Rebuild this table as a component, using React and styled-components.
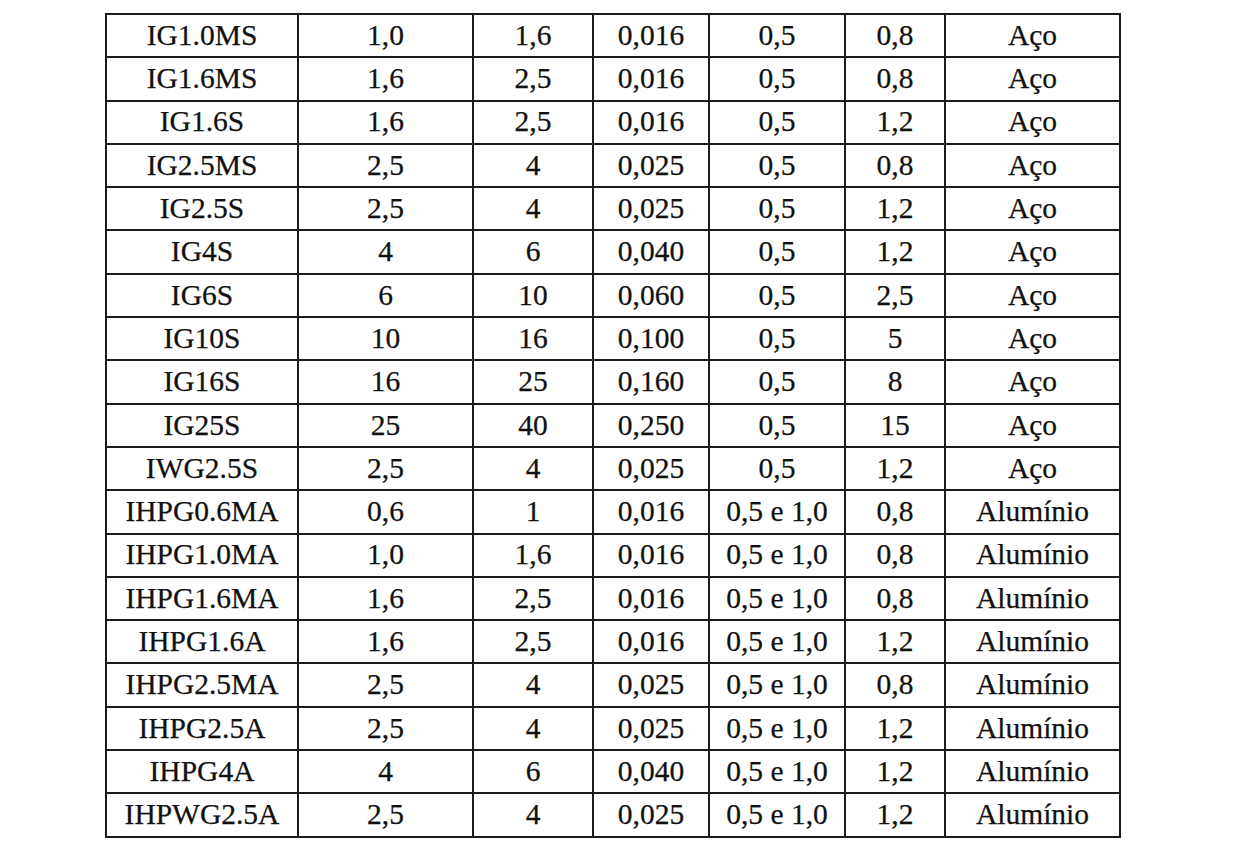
import React from "react";
import styled, { createGlobalStyle } from "styled-components";

const GlobalStyle = createGlobalStyle`
  body {
    margin: 0;
    background: #ffffff;
  }
`;

const Page = styled.div`
  width: 1248px;
  height: 846px;
  padding: 13px 0 0 105px;
  box-sizing: border-box;
  background: #ffffff;
`;

const Table = styled.table`
  border-collapse: collapse;
  table-layout: fixed;
  width: 1014px;
  font-family: "Liberation Serif", "Times New Roman", serif;
  font-size: 29.5px;
  color: #111111;
`;

const Row = styled.tr`
  height: 43.3px;
`;

const Cell = styled.td`
  border: 2px solid #1c1c1c;
  padding: 0;
  text-align: center;
  vertical-align: middle;
  line-height: 1;
  white-space: nowrap;
  -webkit-text-stroke: 0.25px #111111;
`;

const widths = [192, 175, 120, 116, 136, 100, 175];

const rows = [
  ["IG1.0MS", "1,0", "1,6", "0,016", "0,5", "0,8", "Aço"],
  ["IG1.6MS", "1,6", "2,5", "0,016", "0,5", "0,8", "Aço"],
  ["IG1.6S", "1,6", "2,5", "0,016", "0,5", "1,2", "Aço"],
  ["IG2.5MS", "2,5", "4", "0,025", "0,5", "0,8", "Aço"],
  ["IG2.5S", "2,5", "4", "0,025", "0,5", "1,2", "Aço"],
  ["IG4S", "4", "6", "0,040", "0,5", "1,2", "Aço"],
  ["IG6S", "6", "10", "0,060", "0,5", "2,5", "Aço"],
  ["IG10S", "10", "16", "0,100", "0,5", "5", "Aço"],
  ["IG16S", "16", "25", "0,160", "0,5", "8", "Aço"],
  ["IG25S", "25", "40", "0,250", "0,5", "15", "Aço"],
  ["IWG2.5S", "2,5", "4", "0,025", "0,5", "1,2", "Aço"],
  ["IHPG0.6MA", "0,6", "1", "0,016", "0,5 e 1,0", "0,8", "Alumínio"],
  ["IHPG1.0MA", "1,0", "1,6", "0,016", "0,5 e 1,0", "0,8", "Alumínio"],
  ["IHPG1.6MA", "1,6", "2,5", "0,016", "0,5 e 1,0", "0,8", "Alumínio"],
  ["IHPG1.6A", "1,6", "2,5", "0,016", "0,5 e 1,0", "1,2", "Alumínio"],
  ["IHPG2.5MA", "2,5", "4", "0,025", "0,5 e 1,0", "0,8", "Alumínio"],
  ["IHPG2.5A", "2,5", "4", "0,025", "0,5 e 1,0", "1,2", "Alumínio"],
  ["IHPG4A", "4", "6", "0,040", "0,5 e 1,0", "1,2", "Alumínio"],
  ["IHPWG2.5A", "2,5", "4", "0,025", "0,5 e 1,0", "1,2", "Alumínio"],
];

export default function App() {
  return (
    <Page>
      <GlobalStyle />
      <Table>
        <colgroup>
          {widths.map((w, i) => (
            <col key={i} style={{ width: w }} />
          ))}
        </colgroup>
        <tbody>
          {rows.map((r, i) => (
            <Row key={i}>
              {r.map((c, j) => (
                <Cell key={j}>{c}</Cell>
              ))}
            </Row>
          ))}
        </tbody>
      </Table>
    </Page>
  );
}
